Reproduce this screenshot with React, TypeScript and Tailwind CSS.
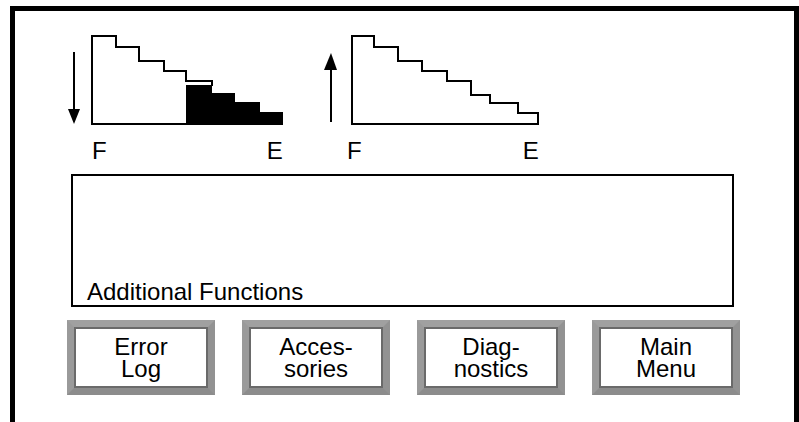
import React from 'react';

const font = { fontFamily: '"Liberation Sans", Arial, sans-serif' };

const DrainChart: React.FC = () => (
  <div className="w-[220px]">
    <svg width="220" height="92" viewBox="0 0 220 92">
      {/* down arrow */}
      <line x1="8" y1="17" x2="8" y2="76" stroke="black" strokeWidth="2" />
      <polygon points="2,74 14,74 8,89" fill="black" />
      {/* outline */}
      <path
        d="M26,89 V1 H50 V12 H73 V26 H98 V36 H120 V46 H146 V51"
        fill="none"
        stroke="black"
        strokeWidth="2"
      />
      <line x1="25" y1="89" x2="121" y2="89" stroke="black" strokeWidth="2" />
      {/* filled part */}
      <polygon
        points="120,50 146,50 146,58 169,58 169,67 194,67 194,77 217,77 217,90 120,90"
        fill="black"
      />
    </svg>
    <div className="mt-[12px] flex pl-[26px] text-[24px] leading-6 text-black">
      <span>F</span>
      <span className="ml-[160px]">E</span>
    </div>
  </div>
);

const FillChart: React.FC = () => (
  <div className="w-[220px]">
    <svg width="220" height="92" viewBox="0 0 220 92">
      {/* up arrow */}
      <line x1="9" y1="33" x2="9" y2="87" stroke="black" strokeWidth="2" />
      <polygon points="2,35 15,35 9,18" fill="black" />
      <path
        d="M30,89 V1 H52 V12 H76 V26 H100 V36 H125 V46 H149 V60 H168 V68 H196 V78 H216 V89 Z"
        fill="none"
        stroke="black"
        strokeWidth="2"
      />
    </svg>
    <div className="mt-[12px] flex pl-[25px] text-[24px] leading-6 text-black">
      <span>F</span>
      <span className="ml-[161px]">E</span>
    </div>
  </div>
);

const BevelButton: React.FC<{ top: string; bottom: string }> = ({ top, bottom }) => (
  <button className="h-[75px] w-[148px] border-[7px] border-t-[#a0a0a0] border-l-[#9a9a9a] border-r-[#929292] border-b-[#8c8c8c] p-0">
    <div className="flex h-full w-full items-center justify-center border-2 border-[#6a6a6a] bg-white text-black">
      <span className="text-center text-[24px] leading-[22px]">
        {top}
        <br />
        {bottom}
      </span>
    </div>
  </button>
);

export default function App() {
  return (
    <div className="h-[422px] w-[799px] overflow-hidden bg-white" style={font}>
      <div className="ml-[10px] mt-[6px] h-[430px] border-l-[5px] border-r-[5px] border-t-[5px] border-black">
        <div className="flex gap-[36px] pl-[51px] pt-[24px]">
          <DrainChart />
          <FillChart />
        </div>

        <div className="ml-[56px] mt-[11px] flex h-[133px] w-[663px] flex-col justify-end border-2 border-black pb-[1px] pl-[14px]">
          <span className="text-[24px] leading-6 text-black">Additional Functions</span>
        </div>

        <div className="ml-[52px] mt-[13px] flex gap-[27px]">
          <BevelButton top="Error" bottom="Log" />
          <BevelButton top="Acces-" bottom="sories" />
          <BevelButton top="Diag-" bottom="nostics" />
          <BevelButton top="Main" bottom="Menu" />
        </div>
      </div>
    </div>
  );
}
